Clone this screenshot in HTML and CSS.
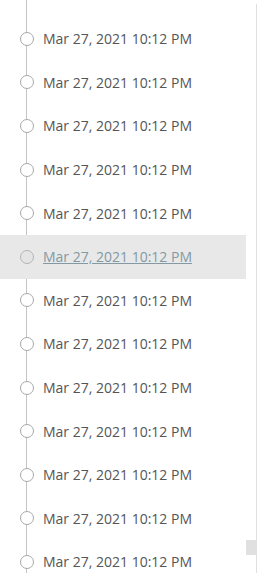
FILE: index.html
```html
<!DOCTYPE html>
<html>
<head>
  <title>History</title>
  <meta name="viewport" content="width=device-width, initial-scale=1.0">
  <link rel="stylesheet" href="styles.css">
</head>
<body>
  <div class="panel">
    <div class="timeline">
      <div class="lead"></div>
      <ul class="entries">
        <li class="entry"><span class="dot"></span><a class="stamp">Mar 27, 2021 10:12 PM</a></li>
        <li class="entry"><span class="dot"></span><a class="stamp">Mar 27, 2021 10:12 PM</a></li>
        <li class="entry"><span class="dot"></span><a class="stamp">Mar 27, 2021 10:12 PM</a></li>
        <li class="entry"><span class="dot"></span><a class="stamp">Mar 27, 2021 10:12 PM</a></li>
        <li class="entry"><span class="dot"></span><a class="stamp">Mar 27, 2021 10:12 PM</a></li>
        <li class="entry active"><span class="dot"></span><a class="stamp">Mar 27, 2021 10:12 PM</a></li>
        <li class="entry"><span class="dot"></span><a class="stamp">Mar 27, 2021 10:12 PM</a></li>
        <li class="entry"><span class="dot"></span><a class="stamp">Mar 27, 2021 10:12 PM</a></li>
        <li class="entry"><span class="dot"></span><a class="stamp">Mar 27, 2021 10:12 PM</a></li>
        <li class="entry"><span class="dot"></span><a class="stamp">Mar 27, 2021 10:12 PM</a></li>
        <li class="entry"><span class="dot"></span><a class="stamp">Mar 27, 2021 10:12 PM</a></li>
        <li class="entry"><span class="dot"></span><a class="stamp">Mar 27, 2021 10:12 PM</a></li>
        <li class="entry"><span class="dot"></span><a class="stamp">Mar 27, 2021 10:12 PM</a></li>
      </ul>
    </div>
    <div class="track">
      <div class="thumb"></div>
    </div>
    <div class="divider"></div>
  </div>
</body>
</html>
```

FILE: styles.css
```css
body {
  margin: 0;
  padding: 0;
  font-family: "Open Sans", Arial, sans-serif;
  background-color: #ffffff;
  color: #525252;
  overflow: hidden;
}

.panel {
  display: flex;
  height: 573px;
}

.timeline {
  width: 246px;
  background: linear-gradient(#c4c4c4, #c4c4c4) no-repeat 26px 0 / 1px 100%;
}

.lead {
  height: 17px;
}

.entries {
  list-style: none;
  margin: 0;
  padding: 0;
}

.entry {
  display: flex;
  align-items: center;
  height: 43.6px;
}

.dot {
  box-sizing: border-box;
  width: 14px;
  height: 14px;
  margin-left: 19.5px;
  margin-right: 9.5px;
  border: 1px solid #a8a8a8;
  border-radius: 50%;
  background-color: #ffffff;
}

.stamp {
  font-size: 14px;
  color: #555555;
  cursor: pointer;
}

.entry.active {
  background-color: #e8e8e8;
}

.entry.active .dot {
  background-color: #e4e4e4;
  border-color: #b4b4b4;
}

.entry.active .stamp {
  color: #8399a3;
  text-decoration: underline;
}

.track {
  width: 10px;
  padding-top: 540px;
}

.thumb {
  height: 15px;
  background-color: #e0e0e0;
}

.divider {
  width: 1px;
  margin-top: 4px;
  background-color: #e0e0e0;
}
```
